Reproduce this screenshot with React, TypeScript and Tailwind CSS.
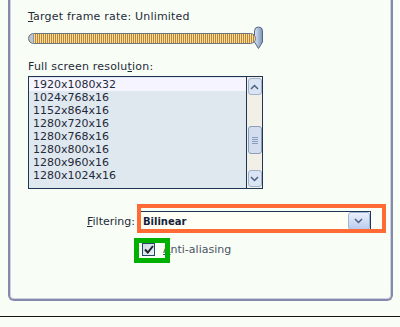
import React from 'react';

const resolutions = [
  '1920x1080x32',
  '1024x768x16',
  '1152x864x16',
  '1280x720x16',
  '1280x768x16',
  '1280x800x16',
  '1280x960x16',
  '1280x1024x16',
];

const SliderThumb = () => (
  <svg width="11" height="24" viewBox="0 0 11 24" className="-ml-[3px] shrink-0">
    <defs>
      <linearGradient id="thumbFill" x1="0" y1="0" x2="1" y2="0">
        <stop offset="0" stopColor="#dfe7f3" />
        <stop offset="0.5" stopColor="#a9bcd8" />
        <stop offset="1" stopColor="#7f96b8" />
      </linearGradient>
    </defs>
    <path d="M1.5 5 Q1.5 1 5.5 1 Q9.5 1 9.5 5 L9.5 16 L5.5 22.5 L1.5 16 Z" fill="url(#thumbFill)" stroke="#56667e" strokeWidth="1" />
  </svg>
);

const Chevron = ({ up }: { up?: boolean }) => (
  <svg width="9" height="6" viewBox="0 0 9 6">
    <path d={up ? 'M1 5 L4.5 1.5 L8 5' : 'M1 1 L4.5 4.5 L8 1'} fill="none" stroke="#4d6185" strokeWidth="1.5" />
  </svg>
);

const App = () => {
  return (
    <div className="relative w-[400px] h-[327px] bg-[#f8fef6] font-['DejaVu_Sans',sans-serif] text-[11px] text-[#1f2a3a] overflow-hidden">
      <div className="ml-[8px] w-[385px] h-[301px] border-x-2 border-b-2 border-[#8589ab] rounded-b-[6px] shadow-[inset_1px_0_0_#cdd0e2,inset_-1px_0_0_#cdd0e2,inset_0_-1px_0_#cdd0e2]">
        <div className="pl-[18px] pt-[10px]">
          <div className="leading-[13px] tracking-[0.2px]">
            <span className="underline">T</span>arget frame rate: Unlimited
          </div>
          <div className="mt-[3px] flex items-center h-[24px]">
            <div className="relative w-[228px] h-[11px] rounded-full border border-[#6c7480] overflow-hidden bg-[repeating-linear-gradient(90deg,#c48622_0px,#c48622_1px,#f4ddaa_1px,#f4ddaa_2px)]">
              <div className="absolute left-0 top-0 h-full w-[5px] rounded-l-full bg-[#b9c6d8] border-r border-[#8996a8]" />
            </div>
            <SliderThumb />
          </div>
          <div className="mt-[10px] leading-[13px] tracking-[0.2px]">
            Full screen resolu<span className="underline">t</span>ion:
          </div>
          <div className="mt-[3px] flex w-[235px] h-[113px] border border-[#1d3654] bg-[#f1efe6]">
            <div className="flex-1 bg-[#dfe7ef] pt-px border-r border-[#1d3654]">
              {resolutions.map((r, i) => (
                <div
                  key={r}
                  className={`h-[13px] leading-[13px] pl-[4px] ${i === 0 ? 'bg-[#f6f5ff]' : ''}`}
                >
                  {r}
                </div>
              ))}
            </div>
            <div className="w-[15px] flex flex-col items-center py-px">
              <div className="w-[14px] h-[17px] rounded-[3px] border border-[#a3b2cc] bg-[#dbe4f3] flex items-center justify-center">
                <Chevron up />
              </div>
              <div className="flex-1 w-full flex flex-col">
                <div className="h-[31px]" />
                <div className="w-[14px] h-[28px] mx-auto rounded-[3px] border border-[#8b9dbb] bg-[#d3ddef] flex flex-col items-center justify-center gap-px">
                  <div className="w-[6px] h-px bg-[#8b9dbb]" />
                  <div className="w-[6px] h-px bg-[#8b9dbb]" />
                  <div className="w-[6px] h-px bg-[#8b9dbb]" />
                  <div className="w-[6px] h-px bg-[#8b9dbb]" />
                </div>
              </div>
              <div className="w-[14px] h-[17px] rounded-[3px] border border-[#a3b2cc] bg-[#dbe4f3] flex items-center justify-center">
                <Chevron />
              </div>
            </div>
          </div>
          <div className="mt-[22px] ml-[59px] flex items-center gap-[5px]">
            <span className="leading-[13px]">
              <span className="underline">F</span>iltering:
            </span>
            <div className="flex w-[231px] h-[20px] border border-[#1f3552] bg-[#fffff6]">
              <div className="flex-1 pl-[2px] flex items-center font-bold text-[10px] text-[#14233a]">Bilinear</div>
              <div className="w-[22px] h-full rounded-[3px] border border-[#9fb4d8] bg-[linear-gradient(180deg,#eaf0fb,#b9cbec)] flex items-center justify-center">
                <Chevron />
              </div>
            </div>
          </div>
          <div className="mt-[12px] ml-[114px] flex items-center gap-[8px]">
            <div className="w-[13px] h-[13px] border border-[#23486e] bg-[linear-gradient(135deg,#cfd8e2,#eef2f6)] flex items-center justify-center">
              <svg width="10" height="9" viewBox="0 0 10 9">
                <path d="M1 4.5 L3.8 7.5 L9 1" fill="none" stroke="#18202c" strokeWidth="2" />
              </svg>
            </div>
            <span className="leading-[13px] text-[#4b5263]">
              <span className="underline">A</span>nti-aliasing
            </span>
          </div>
        </div>
      </div>
      <div className="mt-[15px] h-px bg-[#151515]" />

      <div className="absolute left-[137px] top-[204px] w-[249px] h-[29px] border-[4px] border-[#ff6a35]" />
      <div className="absolute left-[134px] top-[238px] w-[36px] h-[25px] border-[5px] border-[#00b000]" />
    </div>
  );
};

export default App;
